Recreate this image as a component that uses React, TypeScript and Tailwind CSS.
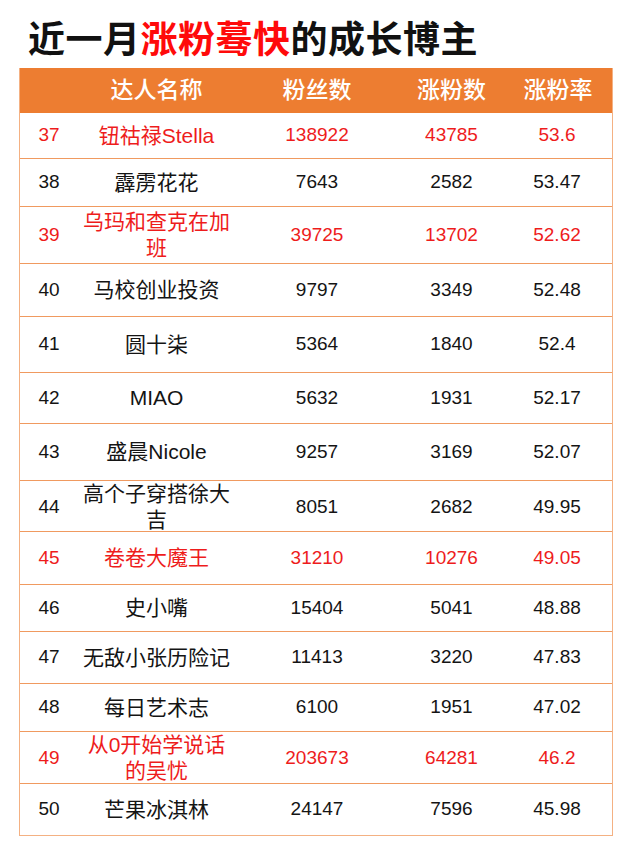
const FONT = "font-['Liberation_Sans','Noto_Sans_CJK_SC',sans-serif]";

interface Row {
  rank: number;
  name: string;
  fans: string;
  gain: string;
  rate: string;
  hot?: boolean;
  h: string;
}

// row heights follow the screenshot, they are not all equal
const rows: Row[] = [
  { rank: 37, name: '钮祜禄Stella', fans: '138922', gain: '43785', rate: '53.6', hot: true, h: 'h-[46px]' },
  { rank: 38, name: '霹雳花花', fans: '7643', gain: '2582', rate: '53.47', h: 'h-[48px]' },
  { rank: 39, name: '乌玛和查克在加班', fans: '39725', gain: '13702', rate: '52.62', hot: true, h: 'h-[57px]' },
  { rank: 40, name: '马校创业投资', fans: '9797', gain: '3349', rate: '52.48', h: 'h-[53px]' },
  { rank: 41, name: '圆十柒', fans: '5364', gain: '1840', rate: '52.4', h: 'h-[56px]' },
  { rank: 42, name: 'MIAO', fans: '5632', gain: '1931', rate: '52.17', h: 'h-[51px]' },
  { rank: 43, name: '盛晨Nicole', fans: '9257', gain: '3169', rate: '52.07', h: 'h-[57px]' },
  { rank: 44, name: '高个子穿搭徐大吉', fans: '8051', gain: '2682', rate: '49.95', h: 'h-[51px]' },
  { rank: 45, name: '卷卷大魔王', fans: '31210', gain: '10276', rate: '49.05', hot: true, h: 'h-[53px]' },
  { rank: 46, name: '史小嘴', fans: '15404', gain: '5041', rate: '48.88', h: 'h-[47px]' },
  { rank: 47, name: '无敌小张历险记', fans: '11413', gain: '3220', rate: '47.83', h: 'h-[52px]' },
  { rank: 48, name: '每日艺术志', fans: '6100', gain: '1951', rate: '47.02', h: 'h-[48px]' },
  { rank: 49, name: '从0开始学说话的吴忧', fans: '203673', gain: '64281', rate: '46.2', hot: true, h: 'h-[52px]' },
  { rank: 50, name: '芒果冰淇林', fans: '24147', gain: '7596', rate: '45.98', h: 'h-[51px]' },
];

const COLS = 'grid grid-cols-[58px_157px_164px_105px_1fr]';

export default function App() {
  return (
    <div className={`w-[637px] h-[850px] bg-white ${FONT}`}>
      {/* Title */}
      <div className="h-[68px] pl-[28px] pt-[19px]">
        <h1 className="text-[37px] leading-[37px] font-bold text-[#111] font-['Noto_Sans_CJK_SC',sans-serif] tracking-[0.5px]">
          近一月<span className="text-[#ff0a0a]">涨粉蓦快</span>的成长博主
        </h1>
      </div>

      <div className="ml-[19px] w-[594px] border-x border-b border-[#f4b183]">
        {/* Header */}
        <div className={`${COLS} h-[45px] items-center bg-[#ed7d31] text-white text-[23px] font-medium`}>
          <div />
          <div className="text-center">达人名称</div>
          <div className="text-center">粉丝数</div>
          <div className="text-center">涨粉数</div>
          <div className="text-center">涨粉率</div>
        </div>

        {rows.map((r, i) => (
          <div
            key={r.rank}
            className={`${COLS} ${r.h} items-center ${i < rows.length - 1 ? 'border-b border-[#f09a60]' : ''} ${
              r.hot ? 'text-[#ee1c1c]' : 'text-[#141414]'
            } text-[19px]`}
          >
            <div className="text-center">{r.rank}</div>
            <div className="px-[3px] text-center text-[21px] leading-[26px]">{r.name}</div>
            <div className="text-center">{r.fans}</div>
            <div className="text-center">{r.gain}</div>
            <div className="text-center pr-[2px]">{r.rate}</div>
          </div>
        ))}
      </div>
    </div>
  );
}
